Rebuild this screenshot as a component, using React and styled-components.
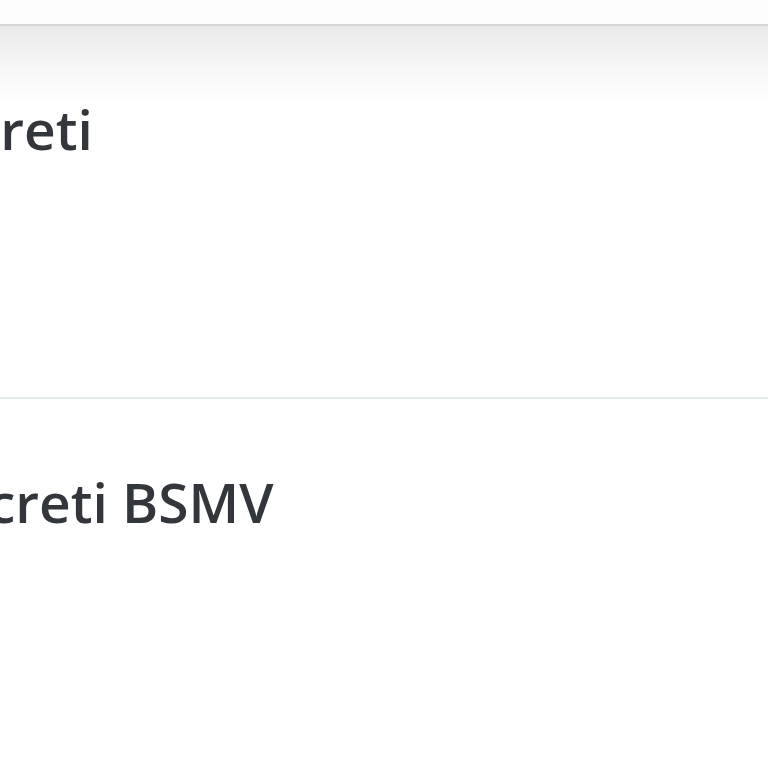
import styled, { createGlobalStyle } from 'styled-components'

const Global = createGlobalStyle`
  html, body {
    margin: 0;
    padding: 0;
    background: #ffffff;
  }
  body {
    font-family: 'Open Sans', 'Noto Sans', sans-serif;
    overflow: hidden;
  }
`

const Page = styled.div`
  width: 768px;
  height: 768px;
  overflow: hidden;
  display: flex;
  flex-direction: column;
`

const TopBar = styled.header`
  height: 24px;
  flex: none;
  background: #fdfdfd;
  border-bottom: 2px solid #d6d6d8;
`

const List = styled.section`
  display: flex;
  flex-direction: column;
`

const Row = styled.div`
  height: ${({ $height }) => $height}px;
  flex: none;
  box-sizing: border-box;
  padding-top: ${({ $top }) => $top}px;
  border-bottom: ${({ $divider }) => ($divider ? '2px solid #e3e8eb' : 'none')};
  background: ${({ $shaded }) =>
    $shaded ? 'linear-gradient(to bottom, #e9e9ea 0px, #f6f6f6 40px, #ffffff 78px)' : '#ffffff'};
  overflow: hidden;
`

const Title = styled.h2`
  margin: 0 0 0 ${({ $shift }) => $shift}px;
  font-size: 55px;
  line-height: 68px;
  font-weight: 600;
  color: #33373b;
  white-space: nowrap;
`

export default function App() {
  return (
    <Page>
      <Global />
      <TopBar />
      <List>
        <Row $height={373} $top={69} $divider $shaded>
          <Title $shift={-99}>Decreti</Title>
        </Row>
        <Row $height={369} $top={69}>
          <Title $shift={-84}>Decreti BSMV</Title>
        </Row>
      </List>
    </Page>
  )
}
